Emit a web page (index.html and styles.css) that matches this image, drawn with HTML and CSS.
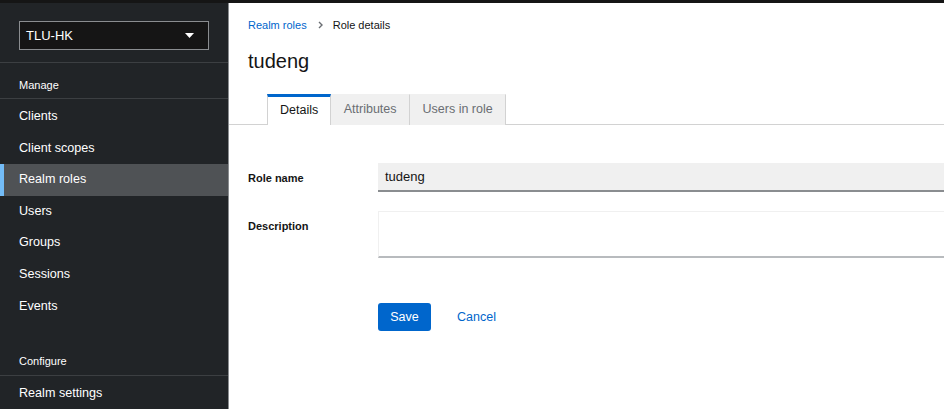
FILE: index.html
```html
<!DOCTYPE html>
<html lang="en">
<head>
<meta charset="utf-8">
<title>Realm roles - tudeng</title>
<link rel="stylesheet" href="styles.css">
</head>
<body>
<div class="topstrip"></div>
<div class="app">
  <aside class="sidebar">
    <div class="realm-section">
      <div class="realm-select">
        <span>TLU-HK</span>
        <svg class="caret" width="9" height="5" viewBox="0 0 9 5"><path d="M0 0 H9 L4.5 5 Z" fill="#fff"/></svg>
      </div>
    </div>
    <div class="nav-title first">Manage</div>
    <nav class="nav-list">
      <a class="nav-item">Clients</a>
      <a class="nav-item">Client scopes</a>
      <a class="nav-item active">Realm roles</a>
      <a class="nav-item">Users</a>
      <a class="nav-item">Groups</a>
      <a class="nav-item">Sessions</a>
      <a class="nav-item">Events</a>
    </nav>
    <div class="nav-title second">Configure</div>
    <nav class="nav-list">
      <a class="nav-item">Realm settings</a>
    </nav>
  </aside>
  <main class="main">
    <div class="page-head">
      <div class="breadcrumb">
        <a class="crumb-link">Realm roles</a>
        <svg class="crumb-sep" width="5" height="8" viewBox="0 0 5 8"><path d="M1 1 L4 4 L1 7" fill="none" stroke="#6a6e73" stroke-width="1.4"/></svg>
        <span class="crumb-current">Role details</span>
      </div>
      <h1 class="title">tudeng</h1>
    </div>
    <div class="tabs">
      <div class="tab current">Details</div>
      <div class="tab">Attributes</div>
      <div class="tab">Users in role</div>
    </div>
    <form class="form">
      <label class="label">Role name</label>
      <div class="input">tudeng</div>
      <label class="label">Description</label>
      <div class="textarea"></div>
      <div></div>
      <div class="actions">
        <button type="button" class="btn-primary">Save</button>
        <a class="btn-link">Cancel</a>
      </div>
    </form>
  </main>
</div>
</body>
</html>
```
FILE: styles.css
```css
html, body {
  margin: 0;
  padding: 0;
  height: 100%;
  overflow: hidden;
}
body {
  font-family: "Liberation Sans", Arial, sans-serif;
  color: #151515;
  background: #fff;
  display: flex;
  flex-direction: column;
}
.topstrip {
  height: 3px;
  background: #151515;
  flex: none;
}
.app {
  flex: 1;
  display: flex;
  min-height: 0;
}
.sidebar {
  width: 228px;
  flex: none;
  background: #212427;
  display: flex;
  flex-direction: column;
  color: #fff;
}
.realm-section {
  padding: 18px 19px 12px 19px;
  border-bottom: 1px solid #3c3f42;
}
.realm-select {
  height: 27px;
  border: 1px solid #8a8d90;
  background: #151515;
  display: flex;
  align-items: center;
  justify-content: space-between;
  padding: 0 14px 0 6px;
  font-size: 13px;
}
.caret { display: block; }
.nav-title {
  font-size: 11px;
  line-height: 14px;
  padding: 0 19px;
  border-bottom: 1px solid #3c3f42;
  color: #fff;
}
.nav-title.first { padding-top: 15px; padding-bottom: 6px; }
.nav-title.second { padding-top: 32px; padding-bottom: 7px; }
.nav-list {
  display: flex;
  flex-direction: column;
  padding-top: 2px;
}
.nav-item {
  display: block;
  height: 31.6px;
  line-height: 31.6px;
  padding: 0 19px;
  font-size: 12.6px;
  color: #fff;
  box-sizing: border-box;
}
.nav-item.active {
  background: #4f5255;
  border-left: 4px solid #73bcf7;
  padding-left: 15px;
}
.main {
  flex: 1;
  border-left: 1px solid #8a8d90;
  min-width: 0;
  overflow: hidden;
}
.page-head {
  padding: 15px 20px 0 19px;
}
.breadcrumb {
  display: flex;
  align-items: center;
  height: 14px;
  font-size: 11px;
}
.crumb-link { color: #0066cc; }
.crumb-sep { margin: 0 10px 0 11px; display: block; }
.crumb-current { color: #151515; }
.title {
  margin: 17px 0 0 0;
  font-size: 20px;
  line-height: 24px;
  font-weight: 400;
}
.tabs {
  margin-top: 21px;
  display: flex;
  padding-left: 38px;
  border-bottom: 1px solid #d2d2d2;
  height: 30px;
}
.tab {
  box-sizing: border-box;
  height: 31px;
  padding: 0 12.5px;
  font-size: 12.5px;
  line-height: 29px;
  color: #6a6e73;
  background: #f0f0f0;
  border-top: 1px solid #f0f0f0;
  border-right: 1px solid #d2d2d2;
}
.tab.current {
  color: #151515;
  background: #fff;
  border-top: 3px solid #0066cc;
  border-left: 1px solid #d2d2d2;
  line-height: 27px;
  padding: 0 12px;
}
.form {
  display: grid;
  grid-template-columns: 130px 1fr;
  row-gap: 19px;
  padding: 38px 0 0 19px;
}
.label {
  font-size: 11px;
  font-weight: 700;
  line-height: 14px;
  padding-top: 8px;
}
.input {
  height: 29px;
  box-sizing: border-box;
  background: #f0f0f0;
  border-bottom: 2px solid #8a8d90;
  padding-left: 7px;
  font-size: 13px;
  line-height: 27px;
}
.textarea {
  height: 47px;
  box-sizing: border-box;
  background: #fff;
  border-top: 1px solid #f0f0f0;
  border-left: 1px solid #f0f0f0;
  border-bottom: 2px solid #b8bbbe;
}
.actions {
  margin-top: 26px;
  display: flex;
  align-items: center;
}
.btn-primary {
  width: 53px;
  height: 28px;
  border: 0;
  border-radius: 3px;
  background: #0066cc;
  color: #fff;
  font-family: "Liberation Sans", Arial, sans-serif;
  font-size: 12.5px;
  padding: 0;
}
.btn-link {
  margin-left: 26px;
  color: #0066cc;
  font-size: 12.5px;
}
```
